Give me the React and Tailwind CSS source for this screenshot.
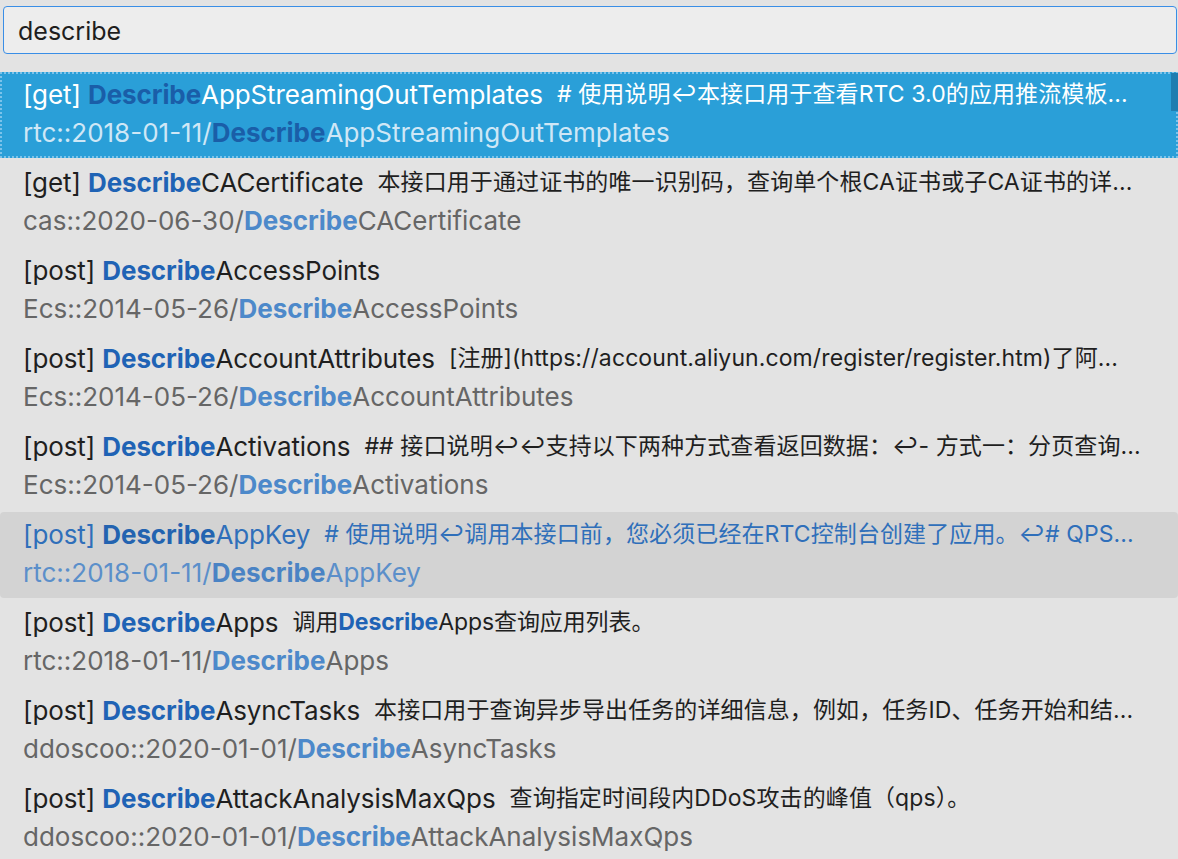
import React from 'react';

const items = [
    { method: 'get', rest: 'AppStreamingOutTemplates', desc: '# 使用说明↩本接口用于查看RTC 3.0的应用推流模板...', ns: 'rtc::2018-01-11/' },
    { method: 'get', rest: 'CACertificate', desc: '本接口用于通过证书的唯一识别码，查询单个根CA证书或子CA证书的详...', ns: 'cas::2020-06-30/' },
    { method: 'post', rest: 'AccessPoints', desc: '', ns: 'Ecs::2014-05-26/' },
    { method: 'post', rest: 'AccountAttributes', desc: '[注册](https://account.aliyun.com/register/register.htm)了阿...', ns: 'Ecs::2014-05-26/' },
    { method: 'post', rest: 'Activations', desc: '## 接口说明↩↩支持以下两种方式查看返回数据：↩- 方式一：分页查询...', ns: 'Ecs::2014-05-26/' },
    { method: 'post', rest: 'AppKey', desc: '# 使用说明↩调用本接口前，您必须已经在RTC控制台创建了应用。↩# QPS...', ns: 'rtc::2018-01-11/' },
    { method: 'post', rest: 'Apps', desc: 'APPS', ns: 'rtc::2018-01-11/' },
    { method: 'post', rest: 'AsyncTasks', desc: '本接口用于查询异步导出任务的详细信息，例如，任务ID、任务开始和结...', ns: 'ddoscoo::2020-01-01/' },
    { method: 'post', rest: 'AttackAnalysisMaxQps', desc: '查询指定时间段内DDoS攻击的峰值（qps）。', ns: 'ddoscoo::2020-01-01/' },
];

const font = { fontFamily: 'Inter, "Noto Sans CJK SC", sans-serif' };

const Row = ({ item, state }) => {
    const selected = state === 'selected';
    const hover = state === 'hover';

    const rowBg = selected
        ? 'bg-[#2a9fd8] outline-2 outline-dotted outline-[#7cc3ea] -outline-offset-2'
        : hover ? 'bg-[#d3d3d3] rounded' : '';
    const mainText = selected ? 'text-white' : hover ? 'text-[#2f6fba]' : 'text-[#1f1f1f]';
    const hl1 = selected ? 'text-[#1a5ea8]' : hover ? 'text-[#2363b0]' : 'text-[#1f63b5]';
    const subText = selected ? 'text-[#cfe7f6]' : hover ? 'text-[#5b8fca]' : 'text-[#666666]';
    const hl2 = selected ? 'text-[#1a5ea8]' : hover ? 'text-[#4a83c4]' : 'text-[#4d89ca]';

    return (
        <div className={`relative h-[86px] mb-[2px] px-[23px] pt-[3px] ${rowBg}`}>
            {/* 第一行 */}
            <div className={`h-[38px] flex items-center whitespace-nowrap overflow-hidden text-[26px] tracking-[-0.1px] ${mainText}`}>
                <span>[{item.method}]&nbsp;</span>
                <span className={`font-bold ${hl1}`}>Describe</span>
                <span>{item.rest}</span>
                {item.desc === 'APPS' ? (
                    <span className="ml-[14px] text-[23px]">
                        调用<span className={`font-bold ${hl1}`}>Describe</span>Apps查询应用列表。
                    </span>
                ) : item.desc && (
                    <span className="ml-[14px] text-[23px] tracking-[0.1px]">{item.desc}</span>
                )}
            </div>
            {/* 第二行 */}
            <div className={`h-[38px] flex items-center whitespace-nowrap text-[26px] ${subText}`}>
                <span>{item.ns}</span>
                <span className={`font-bold ${hl2}`}>Describe</span>
                <span>{item.rest}</span>
            </div>
            {selected && (
                <div className="absolute right-0 top-[1px] w-[7px] h-[38px] bg-[#1f7db0]" />
            )}
        </div>
    );
};

export default function App() {
    return (
        <div className="w-[1178px] h-[859px] overflow-hidden bg-[#e3e3e3]" style={font}>
            <div className="pt-[6px] pl-[3px] pr-[1px]">
                <div className="h-[48px] rounded-[4px] border border-[#3a8ee6] bg-[#ededed] flex items-center pt-[3px] pl-[14px] pr-[15px] text-[25px] text-[#1e1e1e]">
                    describe
                </div>
            </div>
            <div className="mt-[18px]">
                {items.map((item, i) => (
                    <Row key={i} item={item} state={i === 0 ? 'selected' : i === 5 ? 'hover' : 'normal'} />
                ))}
            </div>
        </div>
    );
}
